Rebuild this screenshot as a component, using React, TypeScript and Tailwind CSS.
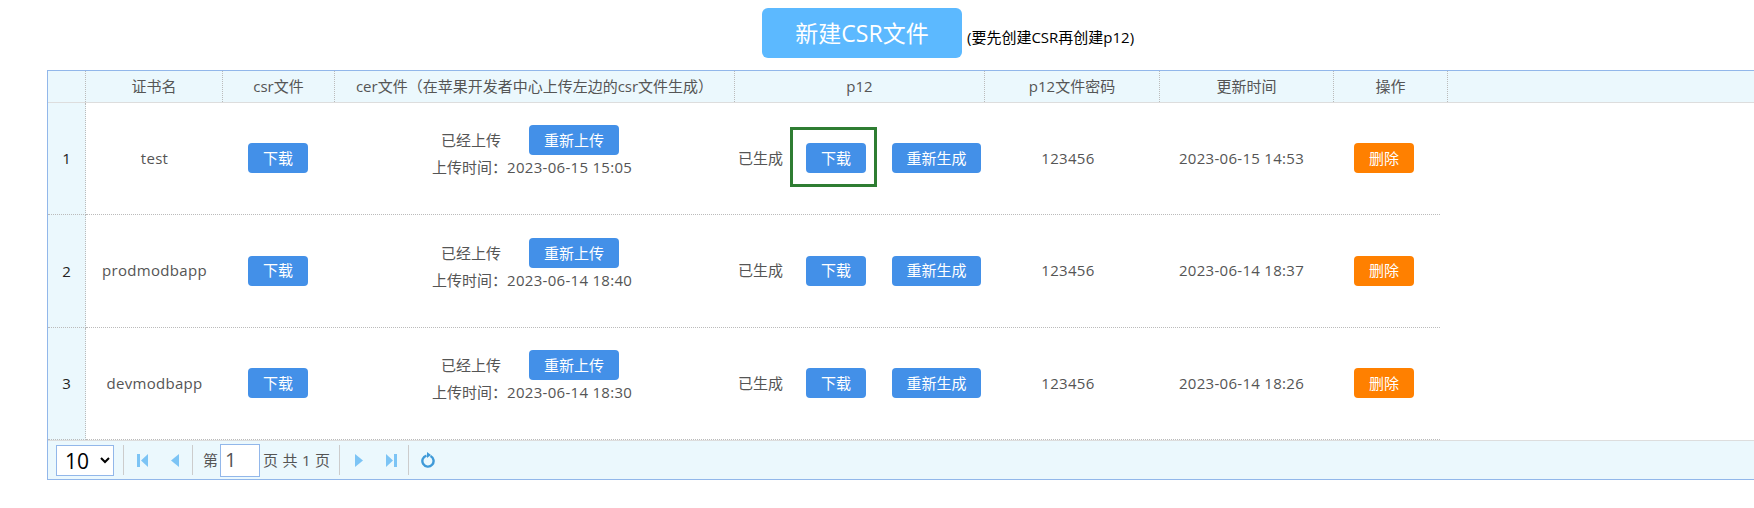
import React from 'react';

interface Cert {
    id: number,
    name: string,
    uploaded: string,
    updated: string
}

const certs: Cert[] = [
    { id: 1, name: 'test', uploaded: '2023-06-15 15:05', updated: '2023-06-15 14:53' },
    { id: 2, name: 'prodmodbapp', uploaded: '2023-06-14 18:40', updated: '2023-06-14 18:37' },
    { id: 3, name: 'devmodbapp', uploaded: '2023-06-14 18:30', updated: '2023-06-14 18:26' },
];

const Btn: React.FC<{ label: string, orange?: boolean, width?: string }> = ({ label, orange, width = 'w-[60px]' }) => (
    <button className={`h-[30px] ${width} rounded-[4px] text-[15px] text-white ${orange ? 'bg-[#ff8000]' : 'bg-[#4390e8]'}`}>
        {label}
    </button>
);

const Sep = () => <div className="h-[30px] w-px shrink-0 bg-[#ccc]" />;

const Row: React.FC<{ cert: Cert, height: string, cerTop: string }> = ({ cert, height, cerTop }) => (
    <div className={`flex ${height}`}>
        <div className="flex w-[38px] shrink-0 items-center justify-center border-r border-b border-dotted border-[#bbb] bg-[#ebf8fd] text-[#222]">{cert.id}</div>
        <div className="flex w-[1354px] shrink-0 border-b border-dotted border-[#bbb] pb-[1px]">
            <div className="flex w-[137px] items-center justify-center tracking-[0.3px]">{cert.name}</div>
            <div className="flex w-[112px] items-center justify-center pr-[2px]"><Btn label="下载" /></div>
            <div className={`w-[400px] ${cerTop}`}>
                <div className="flex items-center pl-[106px]">
                    <span className="w-[88px]">已经上传</span>
                    <Btn label="重新上传" width="w-[90px]" />
                </div>
                <div className="pl-[97px] leading-[24px] whitespace-nowrap">上传时间：<span className="tracking-[0.3px]">{cert.uploaded}</span></div>
            </div>
            <div className="relative flex w-[250px] items-center pl-[3px]">
                <span className="w-[68px]">已生成</span>
                <Btn label="下载" />
                <span className="w-[26px]" />
                <Btn label="重新生成" width="w-[89px]" />
                {cert.id === 1 && <div className="absolute top-[24px] left-[55px] h-[60px] w-[87px] border-[3px] border-[#2e7d32]" />}
            </div>
            <div className="flex w-[175px] items-center justify-center pr-[9px] tracking-[0.3px]">123456</div>
            <div className="flex w-[174px] items-center justify-center pr-[11px] tracking-[0.3px]">{cert.updated}</div>
            <div className="flex flex-1 items-center pl-[20px]"><Btn label="删除" orange /></div>
        </div>
    </div>
);

const App: React.FC = () => {
    const heads = [
        { w: 'w-[137px]', t: '证书名' },
        { w: 'w-[112px]', t: 'csr文件' },
        { w: 'w-[400px]', t: 'cer文件（在苹果开发者中心上传左边的csr文件生成）' },
        { w: 'w-[250px]', t: 'p12' },
        { w: 'w-[175px]', t: 'p12文件密码' },
        { w: 'w-[174px]', t: '更新时间' },
        { w: 'w-[114px]', t: '操作' },
    ];
    return (
        <div className="h-[508px] w-[1754px] overflow-hidden bg-white font-['Open_Sans','Noto_Sans_CJK_SC',sans-serif] text-[15px] text-[#555]">
            <div className="flex items-end pt-[8px] pl-[762px]">
                <button className="h-[50px] w-[200px] rounded-[6px] bg-[#5cb9ff] text-[23px] text-white">新建CSR文件</button>
                <span className="mb-[10px] ml-[5px] whitespace-nowrap text-black">(要先创建CSR再创建p12)</span>
            </div>
            <div className="mt-[12px] ml-[47px] w-[1707px] border-t border-b border-l border-[#92b7ea]">
                <div className="flex h-[32px] border-b border-[#ddd] bg-[#ebf8fd]">
                    <div className="w-[38px] shrink-0 border-r border-dotted border-[#bbb]" />
                    {heads.map((h) => (
                        <div key={h.t} className={`${h.w} flex shrink-0 items-center justify-center border-r border-dotted border-[#bbb] whitespace-nowrap`}>{h.t}</div>
                    ))}
                </div>
                <Row cert={certs[0]} height="h-[112px]" cerTop="pt-[22px]" />
                <Row cert={certs[1]} height="h-[113px]" cerTop="pt-[23px]" />
                <Row cert={certs[2]} height="h-[112px]" cerTop="pt-[22px]" />
                <div className="flex h-[39px] items-center border-t border-[#ddd] bg-[#ebf8fd] pl-[8px]">
                    <select defaultValue="10" className="h-[31px] w-[58px] shrink-0 border border-[#92b7ea] bg-white pl-[4px] text-[21px] leading-none text-black">
                        <option>10</option>
                    </select>
                    <div className="ml-[9px]"><Sep /></div>
                    <svg className="ml-[13px] shrink-0" width="11" height="13" viewBox="0 0 11 13" fill="#7cc4f5"><rect width="3" height="13" /><path d="M11 0v13L4 6.5z" /></svg>
                    <svg className="ml-[23px] shrink-0" width="9" height="13" viewBox="0 0 9 13" fill="#7cc4f5"><path d="M8 0v13L0 6.5z" /></svg>
                    <div className="ml-[12px]"><Sep /></div>
                    <span className="ml-[10px]">第</span>
                    <div className="ml-[2px] flex h-[33px] w-[40px] shrink-0 items-center border border-[#92b7ea] bg-white pl-[4px] text-[20px]">1</div>
                    <span className="ml-[3px] w-[67px] tracking-[0.3px] whitespace-pre">页 共 1 页</span>
                    <div className="ml-[9px]"><Sep /></div>
                    <svg className="ml-[14px] shrink-0" width="9" height="13" viewBox="0 0 9 13" fill="#7cc4f5"><path d="M1 0v13l8-6.5z" /></svg>
                    <svg className="ml-[23px] shrink-0" width="11" height="13" viewBox="0 0 11 13" fill="#7cc4f5"><path d="M0 0v13l7-6.5z" /><rect x="8" width="3" height="13" /></svg>
                    <div className="ml-[11px]"><Sep /></div>
                    <svg className="ml-[12px] shrink-0" width="14" height="16" viewBox="0 0 14 16" fill="none"><path d="M5.5 3.6A5.6 5.6 0 1 0 9.5 4" stroke="#3f9ad8" strokeWidth="2.4" /><path d="M6 0v6l4-3z" fill="#3f9ad8" /></svg>
                </div>
            </div>
        </div>
    );
};

export default App;
